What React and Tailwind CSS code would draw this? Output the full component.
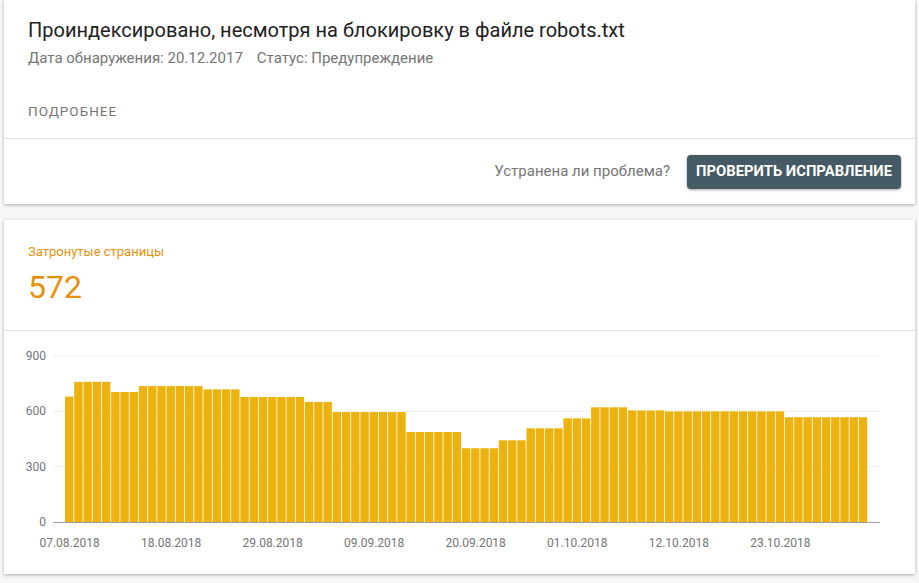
import React from "react";

// values per day, 07.08.2018 .. 01.11.2018
const runs = [
  [680, 1], [760, 4], [705, 3], [737, 7], [719, 4], [678, 7], [651, 3],
  [596, 8], [488, 6], [400, 4], [443, 3], [508, 4], [562, 3], [622, 4],
  [605, 4], [600, 13], [568, 9],
];
const values = runs.flatMap(([v, n]) => Array(n).fill(v));

const dates = ["07.08.2018", "18.08.2018", "29.08.2018", "09.09.2018", "20.09.2018", "01.10.2018", "12.10.2018", "23.10.2018"];

function Chart() {
  const base = 191;
  const scale = 166 / 900;
  const x0 = 61;
  const bw = 803 / values.length;
  return (
    <svg width="911" height="243" className="block" style={{ fontFamily: "Roboto, sans-serif" }}>
      {[900, 600, 300].map((t) => (
        <line key={t} x1="49" x2="876" y1={base - t * scale} y2={base - t * scale} stroke="#eeeeee" strokeWidth="1" />
      ))}
      {values.map((v, i) => (
        <rect
          key={i}
          x={x0 + i * bw}
          y={base - v * scale}
          width={bw - 0.8}
          height={v * scale}
          fill="#ecb310"
        />
      ))}
      <line x1="49" x2="876" y1={base + 0.5} y2={base + 0.5} stroke="#9e9e9e" strokeWidth="1" />
      {[0, 300, 600, 900].map((t) => (
        <text key={t} x="42" y={base - t * scale + 4} textAnchor="end" fontSize="12" fill="#757575">
          {t}
        </text>
      ))}
      {dates.map((d, i) => (
        <text key={d} x={x0 + bw / 2 + i * 11 * bw} y="216" textAnchor="middle" fontSize="12" fill="#757575">
          {d}
        </text>
      ))}
    </svg>
  );
}

export default function App() {
  return (
    <div className="min-h-[583px] bg-[#f6f6f6] px-[4px] pb-2 font-['Roboto',sans-serif]">
      <div className="flex flex-col gap-4">
        <div className="bg-white shadow-[0_1px_3px_rgba(0,0,0,0.3)]">
          <div className="px-6 pt-4">
            <h1 className="text-[20px] leading-7 text-[#212121]">
              Проиндексировано, несмотря на блокировку в файле robots.txt
            </h1>
            <div className="mt-[4px] text-[15px] leading-5 text-[#757575]">
              <span>Дата обнаружения: 20.12.2017</span>
              <span className="ml-[14px]">Статус: Предупреждение</span>
            </div>
            <div className="pt-[33px] pb-[17px] text-[13.5px] uppercase leading-5 tracking-[1px] text-[#757575]">
              Подробнее
            </div>
          </div>
          <div className="flex h-[66px] items-center justify-end border-t border-[#e0e0e0] pr-[14px]">
            <span className="text-[15px] text-[#757575]">Устранена ли проблема?</span>
            <button className="ml-[17px] h-[34px] rounded bg-[#455a64] px-[9px] text-[14.8px] font-bold uppercase text-white shadow-[0_1px_3px_rgba(0,0,0,0.35)]">
              Проверить исправление
            </button>
          </div>
        </div>

        <div className="bg-white shadow-[0_1px_3px_rgba(0,0,0,0.3)]">
          <div className="h-[111px] border-b border-[#e0e0e0] px-6 pt-[24px]">
            <div className="text-[13px] leading-4 text-[#e8910d]">Затронутые страницы</div>
            <div className="mt-[9px] text-[32px] leading-9 text-[#e8910d]">572</div>
          </div>
          <Chart />
        </div>
      </div>
    </div>
  );
}
